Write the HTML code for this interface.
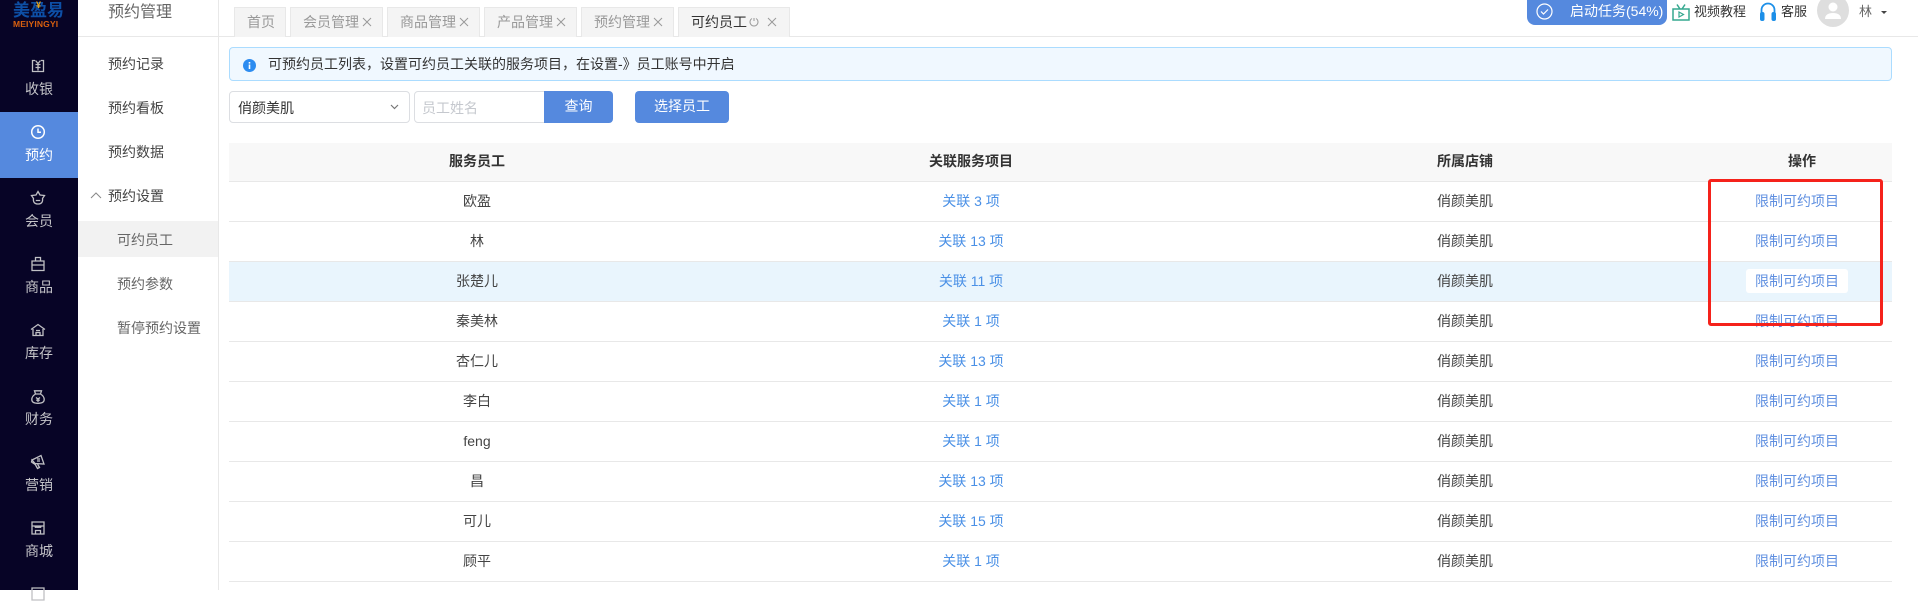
<!DOCTYPE html>
<html lang="zh-CN"><head><meta charset="utf-8"><title>预约管理</title>
<style>
*{box-sizing:border-box}
html,body{margin:0;padding:0;width:1918px;height:590px;overflow:hidden;background:#fff;font-family:"Liberation Sans","Noto Sans CJK SC",sans-serif;font-size:14px;color:#333}
.a{position:absolute;white-space:nowrap;line-height:20px}
#side{position:absolute;left:0;top:0;width:78px;height:590px;background:#070426}
#side .act{position:absolute;left:0;top:112px;width:78px;height:66px;background:#5589de}
.nt{position:absolute;left:0;width:78px;text-align:center;line-height:20px;color:#c4c4c8}
.ic{position:absolute;left:30px;width:16px;height:16px;fill:none;stroke:#c0c0c4;stroke-width:1.3}
.sub{position:absolute;color:#555;line-height:20px;white-space:nowrap}
.tab{position:absolute;top:7px;height:30px;background:#f4f4f4;border:1px solid #e8e8e8;border-bottom:0;color:#999;line-height:28px;padding-left:12px;white-space:nowrap}
.tab svg{position:absolute;top:9px;width:10px;height:10px;stroke:#999;stroke-width:1;fill:none}
.row{position:absolute;left:229px;width:1663px;height:40px;border-bottom:1px solid #e8e8e8}
.c{position:absolute;top:0;line-height:39px;width:300px;text-align:center;white-space:nowrap}
.c1{left:98px;color:#444}.c2{left:592px;color:#4a90e6}.c3{left:1086px;color:#444}.c4{left:1418px;color:#5f8fe0}
</style></head><body>

<div id="side">
<div class="act"></div>
<div class="a" style="left:13px;top:1px;width:52px;height:20px;line-height:20px;font-size:17px;font-weight:700;color:#0d4fa6">美盈易</div>
<div class="a" style="left:36px;top:1px;line-height:9px;font-size:9px;font-weight:700;color:#e8a317">¥</div>
<div class="a" style="left:13px;top:20px;width:52px;line-height:8px;font-size:8.5px;font-weight:700;color:#d9600f;letter-spacing:.15px">MEIYINGYI</div>

<svg class="ic" style="top:58px" viewBox="0 0 16 16"><path d="M5 2.500H2.500v11h11v-11H11M5.500 2.500l2.500 3 2.500-3M5.500 6.500h5M8 6.500v6M5.500 9.500h5"/></svg>
<div class="nt" style="top:79px">收银</div>

<svg class="ic" style="top:124px;stroke:#fff;stroke-width:1.5" viewBox="0 0 16 16"><circle cx="8" cy="8" r="6.3"/><path d="M8 4.500V8.300h3"/></svg>
<div class="nt" style="top:145px;color:#fff">预约</div>

<svg class="ic" style="top:190px" viewBox="0 0 16 16"><path d="M8 1.500l2 3.500 4.500.5-2 3c.5 3.500-1 5.500-4.500 5.500s-5-2-4.500-5.500l-2-3L6 5zM5.800 10.500h4.400"/></svg>
<div class="nt" style="top:211px">会员</div>

<svg class="ic" style="top:256px" viewBox="0 0 16 16"><path d="M2 5h12v9.500H2zM5.500 5V1.500h5V5M2 9h12"/></svg>
<div class="nt" style="top:277px">商品</div>

<svg class="ic" style="top:322px" viewBox="0 0 16 16"><path d="M1 7.500L8 2.500l7 5M3 7v6.500h10V7M6 13.500v-3h4v3M6 8.500h4"/></svg>
<div class="nt" style="top:343px">库存</div>

<svg class="ic" style="top:389px" viewBox="0 0 16 16"><path d="M5.500 5L4.500 1.800h7L10.500 5zM5.500 5C3 6.500 1.800 8.500 1.800 10.500c0 2.500 2 3.800 6.200 3.800s6.200-1.300 6.200-3.800c0-2-1.200-4-3.700-5.500M6 8.500l2 1.500 2-1.500M8 10v3M6.200 11.200h3.600"/></svg>
<div class="nt" style="top:409px">财务</div>

<svg class="ic" style="top:454px" viewBox="0 0 16 16"><path d="M2 6l9-4.500 3 8.500-9-.500zM2 6l-.5 2 3 2 .5-.5zM5 10l2.500 4.500 2-1-2-3.500M7 7h3M7 5h3"/></svg>
<div class="nt" style="top:475px">营销</div>

<svg class="ic" style="top:520px" viewBox="0 0 16 16"><path d="M2 2h12v12H2zM2 6h12M5 6c0 1.800 1.500 1.800 1.500 0 0 1.800 3 1.800 3 0 0 1.800 1.500 1.800 1.500 0M5.500 14v-3.500h5V14"/></svg>
<div class="nt" style="top:541px">商城</div>

<svg class="ic" style="top:586px" viewBox="0 0 16 16"><path d="M2 2h12v12H2z"/></svg>
</div>

<!-- secondary nav -->
<div style="position:absolute;left:78px;top:0;width:141px;height:590px;border-right:1px solid #e8e8e8"></div>
<div style="position:absolute;left:78px;top:36px;width:1840px;height:1px;background:#e8e8e8"></div>
<div class="a" style="left:108px;top:2px;font-size:16px;line-height:22px;color:#666">预约管理</div>
<div class="sub" style="left:108px;top:54px;color:#444">预约记录</div>
<div class="sub" style="left:108px;top:98px;color:#444">预约看板</div>
<div class="sub" style="left:108px;top:142px;color:#444">预约数据</div>
<div class="sub" style="left:108px;top:186px;color:#444">预约设置</div>
<svg style="position:absolute;left:90px;top:191px;width:12px;height:8px;fill:none;stroke:#888" viewBox="0 0 12 8"><path d="M1 7l5-5 5 5"/></svg>
<div style="position:absolute;left:78px;top:221px;width:140px;height:36px;background:#f2f2f2"></div>
<div class="sub" style="left:117px;top:230px;color:#666">可约员工</div>
<div class="sub" style="left:117px;top:274px;color:#666">预约参数</div>
<div class="sub" style="left:117px;top:318px;color:#666">暂停预约设置</div>

<!-- tabs -->
<div class="tab" style="left:234px;width:52px">首页</div>
<div class="tab" style="left:290px;width:93px">会员管理<svg style="left:71px" viewBox="0 0 10 10"><path d="M1 1l8 8M9 1l-8 8"/></svg></div>
<div class="tab" style="left:387px;width:93px">商品管理<svg style="left:71px" viewBox="0 0 10 10"><path d="M1 1l8 8M9 1l-8 8"/></svg></div>
<div class="tab" style="left:484px;width:93px">产品管理<svg style="left:71px" viewBox="0 0 10 10"><path d="M1 1l8 8M9 1l-8 8"/></svg></div>
<div class="tab" style="left:581px;width:93px">预约管理<svg style="left:71px" viewBox="0 0 10 10"><path d="M1 1l8 8M9 1l-8 8"/></svg></div>
<div class="tab" style="left:678px;width:112px;color:#333">可约员工<svg style="left:70px" viewBox="0 0 10 10"><path d="M3 1.500a4 4 0 1 0 4 0M5 1v3"/></svg><svg style="left:88px" viewBox="0 0 10 10"><path d="M1 1l8 8M9 1l-8 8"/></svg></div>

<!-- top right -->
<div style="position:absolute;left:1527px;top:-8px;width:140px;height:33px;border-radius:8px;background:#5589de"></div>
<svg style="position:absolute;left:1536px;top:3px;width:17px;height:17px;fill:none;stroke:#fff;stroke-width:1.200" viewBox="0 0 17 17"><circle cx="8.500" cy="8.500" r="7.500"/><path d="M5 8.500l2.500 2.500 4.500-4.500"/></svg>
<div class="a" style="left:1570px;top:1px;color:#fff">启动任务(54%)</div>
<svg style="position:absolute;left:1672px;top:3px;width:18px;height:18px;fill:none;stroke:#35a88f;stroke-width:1.500" viewBox="0 0 18 18"><path d="M1 6h16v11H1zM5 1.500L8 6M13 1.500L10 6"/><path d="M7 9v5l4.500-2.500z" stroke-width="1.200"/></svg>
<div class="a" style="left:1694px;top:2px;font-size:13px;color:#333">视频教程</div>
<svg style="position:absolute;left:1760px;top:2px;width:16px;height:19px" viewBox="0 0 16 19"><path d="M1.500 11V8a6.500 6.500 0 0 1 13 0v3" fill="none" stroke="#1c8fe8" stroke-width="1.800"/><rect x="0" y="10" width="4.500" height="9" rx="2" fill="#1c8fe8"/><rect x="11.500" y="10" width="4.500" height="9" rx="2" fill="#1c8fe8"/></svg>
<div class="a" style="left:1781px;top:2px;font-size:13px;color:#333">客服</div>
<div style="position:absolute;left:1817px;top:-6px;width:32px;height:33px;border-radius:50%;background:#dedede"></div>
<svg style="position:absolute;left:1825px;top:2px;width:16px;height:17px;fill:#fff" viewBox="0 0 16 17"><circle cx="8" cy="5" r="4.500"/><path d="M0 17c0-4 3-6 8-6s8 2 8 6z"/></svg>
<div class="a" style="left:1859px;top:2px;font-size:13px;color:#666">林</div>
<div style="position:absolute;left:1881px;top:11px;border-left:3px solid transparent;border-right:3px solid transparent;border-top:3px solid #444"></div>

<!-- alert -->
<div style="position:absolute;left:229px;top:47px;width:1663px;height:34px;background:#f0f8ff;border:1px solid #abdcff;border-radius:4px"></div>
<svg style="position:absolute;left:243px;top:59px;width:13px;height:13px" viewBox="0 0 13 13"><circle cx="6.500" cy="6.500" r="6.500" fill="#2d8cf0"/><rect x="5.700" y="5.500" width="1.600" height="4.500" fill="#fff"/><rect x="5.700" y="3" width="1.600" height="1.600" fill="#fff"/></svg>
<div class="a" style="left:268px;top:54px;color:#333">可预约员工列表，设置可约员工关联的服务项目，在设置-》员工账号中开启</div>

<!-- filters -->
<div style="position:absolute;left:229px;top:91px;width:181px;height:32px;border:1px solid #dcdee2;border-radius:4px"></div>
<div class="a" style="left:238px;top:98px;color:#333">俏颜美肌</div>
<svg style="position:absolute;left:390px;top:104px;width:9px;height:6px;fill:none;stroke:#777;stroke-width:1.200" viewBox="0 0 9 6"><path d="M1 1l3.500 3.500L8 1"/></svg>
<div style="position:absolute;left:414px;top:91px;width:132px;height:32px;border:1px solid #dcdee2;border-radius:4px 0 0 4px"></div>
<div class="a" style="left:422px;top:98px;color:#c5c8ce">员工姓名</div>
<div style="position:absolute;left:544px;top:91px;width:69px;height:32px;background:#5589de;border-radius:0 4px 4px 0;color:#fff;text-align:center;line-height:31px">查询</div>
<div style="position:absolute;left:635px;top:91px;width:94px;height:32px;background:#5589de;border-radius:4px;color:#fff;text-align:center;line-height:31px">选择员工</div>

<!-- table -->
<div class="row" style="top:143px;height:39px;background:#f8f8f8"><div class="c c1" style="color:#333;font-weight:700;line-height:37px">服务员工</div><div class="c c2" style="color:#333;font-weight:700;line-height:37px">关联服务项目</div><div class="c c3" style="color:#333;font-weight:700;line-height:37px">所属店铺</div><div class="c c4" style="left:1423px;color:#333;font-weight:700;line-height:37px">操作</div></div>
<div class="row" style="top:182px"><div class="c c1">欧盈</div><div class="c c2">关联 3 项</div><div class="c c3">俏颜美肌</div><div class="c c4">限制可约项目</div></div>
<div class="row" style="top:222px"><div class="c c1">林</div><div class="c c2">关联 13 项</div><div class="c c3">俏颜美肌</div><div class="c c4">限制可约项目</div></div>
<div class="row" style="top:262px;background:#e9f5fd"><div class="c c1">张楚儿</div><div class="c c2">关联 11 项</div><div class="c c3">俏颜美肌</div><div style="position:absolute;left:1517px;top:7px;width:102px;height:24px;background:#fff;border-radius:3px"></div><div class="c c4">限制可约项目</div></div>
<div class="row" style="top:302px"><div class="c c1">秦美林</div><div class="c c2">关联 1 项</div><div class="c c3">俏颜美肌</div><div class="c c4">限制可约项目</div></div>
<div class="row" style="top:342px"><div class="c c1">杏仁儿</div><div class="c c2">关联 13 项</div><div class="c c3">俏颜美肌</div><div class="c c4">限制可约项目</div></div>
<div class="row" style="top:382px"><div class="c c1">李白</div><div class="c c2">关联 1 项</div><div class="c c3">俏颜美肌</div><div class="c c4">限制可约项目</div></div>
<div class="row" style="top:422px"><div class="c c1">feng</div><div class="c c2">关联 1 项</div><div class="c c3">俏颜美肌</div><div class="c c4">限制可约项目</div></div>
<div class="row" style="top:462px"><div class="c c1">昌</div><div class="c c2">关联 13 项</div><div class="c c3">俏颜美肌</div><div class="c c4">限制可约项目</div></div>
<div class="row" style="top:502px"><div class="c c1">可儿</div><div class="c c2">关联 15 项</div><div class="c c3">俏颜美肌</div><div class="c c4">限制可约项目</div></div>
<div class="row" style="top:542px"><div class="c c1">顾平</div><div class="c c2">关联 1 项</div><div class="c c3">俏颜美肌</div><div class="c c4">限制可约项目</div></div>

<!-- red annotation -->
<div style="position:absolute;left:1708px;top:179px;width:175px;height:147px;border:3px solid #f5221b;border-radius:3px"></div>
</body></html>
